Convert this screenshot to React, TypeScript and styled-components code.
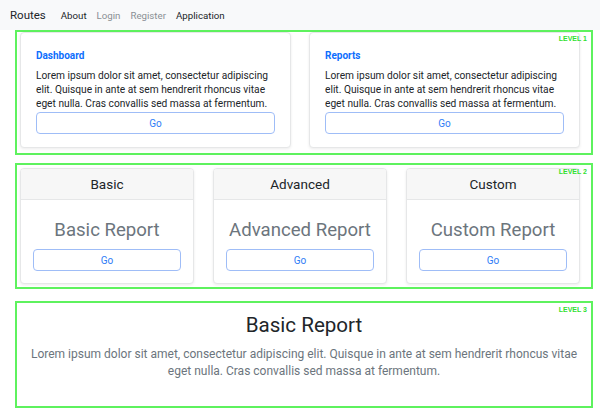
import React from "react";
import styled, { createGlobalStyle } from "styled-components";

const Global = createGlobalStyle`
  html, body { margin: 0; padding: 0; background: #fff; }
  body { font-family: Roboto, "Liberation Sans", Arial, sans-serif; color: #212529; }
  * { box-sizing: border-box; }
`;

const Nav = styled.nav`
  height: 30px;
  background: #f8f9fa;
  display: flex;
  align-items: center;
  padding-left: 10px;
`;
const Brand = styled.span`
  font-size: 11.5px;
  color: #212529;
  margin-right: 15px;
`;
const NavLinks = styled.div`
  display: flex;
  gap: 10px;
`;
const NavLink = styled.span<{ $muted?: boolean }>`
  font-size: 9.7px;
  color: ${(p) => (p.$muted ? "#8a8f94" : "#212529")};
`;

const Main = styled.main`
  padding: 0 7px 0 15px;
  display: flex;
  flex-direction: column;
`;

const Level = styled.section<{ $mt: number; $h: number }>`
  position: relative;
  margin-top: ${(p) => p.$mt}px;
  height: ${(p) => p.$h}px;
  border: 2px solid #5ef25e;
`;
const LevelTag = styled.span`
  position: absolute;
  top: 3px;
  right: 4px;
  font-size: 7px;
  font-weight: bold;
  color: #2fe02f;
  font-family: "Liberation Sans", Arial, sans-serif;
`;

const Row = styled.div<{ $pt: number; $gap: number }>`
  display: flex;
  gap: ${(p) => p.$gap}px;
  padding: ${(p) => p.$pt}px 11px 0 3px;
`;

const Card = styled.div`
  flex: 1;
  height: 116px;
  background: #fff;
  border: 1px solid #e6e7e8;
  border-radius: 4px;
  box-shadow: 0 1px 3px rgba(0, 0, 0, 0.08);
  overflow: hidden;
  display: flex;
  flex-direction: column;
`;
const TextBody = styled.div`
  padding: 16px 15px 0 15px;
  display: flex;
  flex-direction: column;
`;
const CardTitle = styled.div`
  font-size: 10px;
  line-height: 14px;
  font-weight: bold;
  color: #0d6efd;
  margin-bottom: 6px;
`;
const CardText = styled.p`
  margin: 0 0 1px;
  max-width: 234px;
  font-size: 10.2px;
  line-height: 14px;
  color: #212529;
`;
const GoButton = styled.button`
  width: 100%;
  height: 22px;
  background: #fff;
  border: 1px solid #9fbdf7;
  border-radius: 4px;
  color: #2f7df6;
  font-family: inherit;
  font-size: 10px;
  padding: 0;
`;

const CardHeader = styled.div`
  height: 31px;
  background: #f7f7f7;
  border-bottom: 1px solid #e6e7e8;
  display: flex;
  align-items: center;
  justify-content: center;
  font-size: 13.5px;
  color: #212529;
`;
const CenterBody = styled.div`
  padding: 17px 12px 0;
  display: flex;
  flex-direction: column;
  align-items: center;
`;
const Lead = styled.div`
  font-size: 18.6px;
  line-height: 26px;
  color: #6c757d;
  margin-bottom: 6px;
`;

const Hero = styled.div`
  padding-top: 8px;
  text-align: center;
`;
const HeroTitle = styled.h1`
  margin: 0 0 6px;
  font-size: 20.6px;
  line-height: 29px;
  font-weight: normal;
  color: #212529;
`;
const HeroText = styled.p`
  margin: 0 auto;
  width: 560px;
  font-size: 12px;
  line-height: 17px;
  color: #6c757d;
`;

const lorem =
  "Lorem ipsum dolor sit amet, consectetur adipiscing elit. Quisque in ante at sem hendrerit rhoncus vitae eget nulla. Cras convallis sed massa at fermentum.";

export default function App() {
  return (
    <>
      <Global />
      <Nav>
        <Brand>Routes</Brand>
        <NavLinks>
          <NavLink>About</NavLink>
          <NavLink $muted>Login</NavLink>
          <NavLink $muted>Register</NavLink>
          <NavLink>Application</NavLink>
        </NavLinks>
      </Nav>
      <Main>
        <Level $mt={0} $h={125}>
          <LevelTag>LEVEL 1</LevelTag>
          <Row $pt={0} $gap={18}>
            {["Dashboard", "Reports"].map((t) => (
              <Card key={t}>
                <TextBody>
                  <CardTitle>{t}</CardTitle>
                  <CardText>{lorem}</CardText>
                  <GoButton>Go</GoButton>
                </TextBody>
              </Card>
            ))}
          </Row>
        </Level>
        <Level $mt={8} $h={126}>
          <LevelTag>LEVEL 2</LevelTag>
          <Row $pt={3} $gap={19}>
            {["Basic", "Advanced", "Custom"].map((t) => (
              <Card key={t}>
                <CardHeader>{t}</CardHeader>
                <CenterBody>
                  <Lead>{t} Report</Lead>
                  <GoButton>Go</GoButton>
                </CenterBody>
              </Card>
            ))}
          </Row>
        </Level>
        <Level $mt={12} $h={107}>
          <LevelTag>LEVEL 3</LevelTag>
          <Hero>
            <HeroTitle>Basic Report</HeroTitle>
            <HeroText>{lorem}</HeroText>
          </Hero>
        </Level>
      </Main>
    </>
  );
}
